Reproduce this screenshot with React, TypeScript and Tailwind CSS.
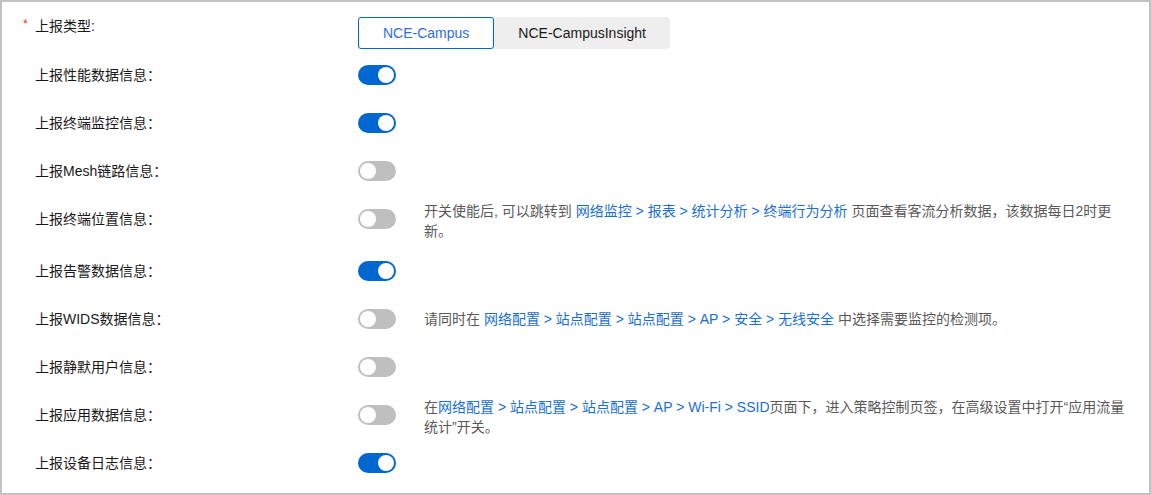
import React from "react";

const FONT = { fontFamily: '"Liberation Sans", Arial, "Noto Sans CJK SC", sans-serif' };

function Toggle({ on }: { on: boolean }) {
  return (
    <div
      className={`relative h-[20px] w-[38px] shrink-0 rounded-full ${on ? "bg-[#0067d1]" : "bg-[#bfbfbf]"}`}
    >
      <div
        className={`absolute top-[2px] h-[16px] w-[16px] rounded-full bg-white ${on ? "left-[20px]" : "left-[2px]"}`}
      />
    </div>
  );
}

const L = ({ children }: { children: React.ReactNode }) => (
  <span className="text-[#1a6fd6]">{children}</span>
);

type Row = {
  label: string;
  on: boolean;
  desc?: React.ReactNode;
  twoLine?: boolean;
  mb?: string;
};

const rows: Row[] = [
  { label: "上报性能数据信息：", on: true },
  { label: "上报终端监控信息：", on: true },
  { label: "上报Mesh链路信息：", on: false },
  {
    label: "上报终端位置信息：",
    on: false,
    twoLine: true,
    desc: (
      <>
        <span className="block whitespace-nowrap">
          开关使能后, 可以跳转到 <L>网络监控 &gt; 报表 &gt; 统计分析 &gt; 终端行为分析</L> 页面查看客流分析数据，该数据每日2时更
        </span>
        <span className="block whitespace-nowrap">新。</span>
      </>
    ),
  },
  { label: "上报告警数据信息：", on: true },
  {
    label: "上报WIDS数据信息：",
    on: false,
    desc: (
      <span className="whitespace-nowrap">
        请同时在 <L>网络配置 &gt; 站点配置 &gt; 站点配置 &gt; AP &gt; 安全 &gt; 无线安全</L> 中选择需要监控的检测项。
      </span>
    ),
  },
  { label: "上报静默用户信息：", on: false },
  {
    label: "上报应用数据信息：",
    on: false,
    twoLine: true,
    mb: "mb-[12px]",
    desc: (
      <>
        <span className="block whitespace-nowrap">
          在<L>网络配置 &gt; 站点配置 &gt; 站点配置 &gt; AP &gt; Wi-Fi &gt; SSID</L>页面下，进入策略控制页签，在高级设置中打开“应用流量
        </span>
        <span className="block whitespace-nowrap">统计”开关。</span>
      </>
    ),
  },
  { label: "上报设备日志信息：", on: true },
];

export default function App() {
  return (
    <div className="h-[495px] w-[1151px] overflow-hidden bg-white" style={FONT}>
      <div className="h-[495px] w-[1151px] overflow-hidden border-2 border-[#c2c2c2] pl-[33px] pt-[15px]">
        {/* type row */}
        <div className="mb-[10px] flex items-start">
          <div className="relative w-[323px] shrink-0 text-[14px] leading-[18px] text-[#191919]">
            <span className="absolute left-[-12px] top-[1px] text-[12px] leading-[12px] text-[#e5302c]">*</span>
            上报类型:
          </div>
          <div className="flex h-[32px] rounded-[3px] bg-[#eeeeee]">
            <div className="flex h-[32px] items-center rounded-[3px] border border-[#0067d1] bg-white px-[24px] text-[14px] text-[#2f6ee0]">
              NCE-Campus
            </div>
            <div className="flex h-[32px] items-center px-[24px] text-[14px] text-[#191919]">
              NCE-CampusInsight
            </div>
          </div>
        </div>

        {rows.map((r, i) => (
          <div key={i} className={`flex items-start ${r.mb ?? "mb-[16px]"}`}>
            <div className="flex h-[32px] w-[323px] shrink-0 items-center text-[14px] text-[#191919]">
              {r.label}
            </div>
            <div className="flex h-[32px] w-[38px] shrink-0 items-center">
              <Toggle on={r.on} />
            </div>
            {r.desc &&
              (r.twoLine ? (
                <div className="ml-[28px] -mt-[2px] h-[38px] text-[14px] leading-[20px] text-[#595959]">
                  {r.desc}
                </div>
              ) : (
                <div className="ml-[28px] flex h-[32px] items-center text-[14px] text-[#595959]">
                  {r.desc}
                </div>
              ))}
          </div>
        ))}
      </div>
    </div>
  );
}
